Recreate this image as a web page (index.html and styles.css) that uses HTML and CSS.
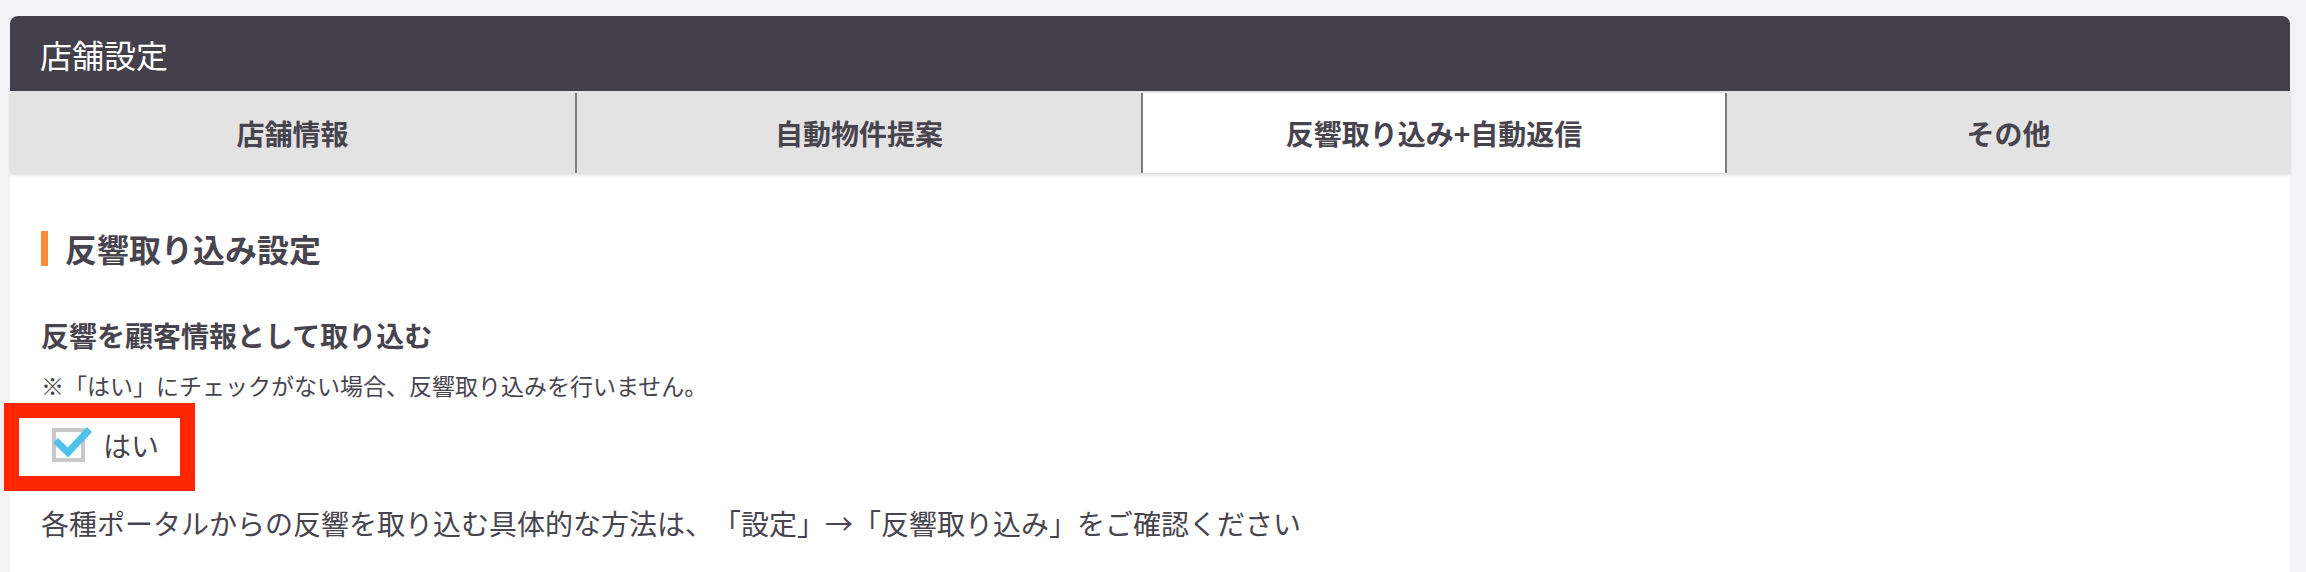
FILE: index.html
```html
<!DOCTYPE html>
<html lang="ja">
<head>
<meta charset="utf-8">
<title>店舗設定</title>
<link rel="stylesheet" href="styles.css">
</head>
<body>
<div class="card">
  <div class="card-header">店舗設定</div>
  <div class="tabs">
    <div class="tab">店舗情報</div>
    <div class="tab divided">自動物件提案</div>
    <div class="tab divided active">反響取り込み+自動返信</div>
    <div class="tab divided">その他</div>
  </div>
  <div class="card-body">
    <h2 class="section-title">反響取り込み設定</h2>
    <h3 class="field-label">反響を顧客情報として取り込む</h3>
    <p class="note">※「はい」にチェックがない場合、反響取り込みを行いません。</p>
    <div class="check-row">
      <span class="highlight"></span>
      <span class="checkbox">
        <svg class="checkmark" width="42" height="34" viewBox="0 0 42 34"><path d="M3.5 12.5 L16 24.5 L37.5 1.5" fill="none" stroke="#4fc1ea" stroke-width="7" stroke-linecap="butt" stroke-linejoin="miter"/></svg>
      </span>
      <span class="check-label">はい</span>
    </div>
    <p class="help">各種ポータルからの反響を取り込む具体的な方法は、「設定」→「反響取り込み」をご確認ください</p>
  </div>
</div>
</body>
</html>
```

FILE: styles.css
```css
html, body {
  margin: 0;
  padding: 0;
}
body {
  background: #f3f3f5;
  font-family: "Noto Sans CJK JP", "Noto Sans", sans-serif;
  color: #47444e;
  padding: 16px 16px 0 10px;
  overflow: hidden;
  text-spacing-trim: space-all;
}
.card {
  width: 2280px;
  background: #ffffff;
  border-radius: 8px 8px 0 0;
  min-height: 600px;
}
.card-header {
  height: 75px;
  background: #433f4b;
  border-radius: 8px 8px 0 0;
  color: #ffffff;
  font-size: 32px;
  display: flex;
  align-items: center;
  padding-left: 30px;
  box-sizing: border-box;
}
.tabs {
  display: grid;
  grid-template-columns: 565fr 566fr 584fr 565fr;
  height: 82px;
  background: #e3e3e3;
  padding-top: 2px;
  box-sizing: border-box;
  box-shadow: 0 2px 3px rgba(0, 0, 0, 0.14);
  position: relative;
}
.tab {
  display: flex;
  align-items: center;
  justify-content: center;
  font-size: 28px;
  font-weight: 700;
  color: #47444e;
}
.tab.divided {
  border-left: 2px solid #7b7980;
}
.tab.active {
  background: #ffffff;
}
.card-body {
  padding: 58px 0 0 31px;
}
.section-title {
  margin: 0;
  font-size: 32px;
  font-weight: 700;
  line-height: 35px;
  border-left: 7px solid #ff8c3b;
  padding-left: 17px;
  color: #47444e;
}
.field-label {
  margin: 49px 0 0 0;
  font-size: 28px;
  font-weight: 700;
  line-height: 40px;
}
.note {
  margin: 13px 0 0 0;
  font-size: 23px;
  line-height: 34px;
}
.check-row {
  position: relative;
  margin-top: 23px;
  height: 40px;
  display: flex;
  align-items: center;
  padding-left: 11px;
}
.highlight {
  position: absolute;
  left: -37px;
  top: -22px;
  width: 191px;
  height: 88px;
  border: 15px solid #ff2600;
  box-sizing: border-box;
}
.checkbox {
  position: relative;
  width: 33px;
  height: 34px;
  border: 4px solid #c9c9c9;
  box-sizing: border-box;
  background: #ffffff;
}
.checkmark {
  position: absolute;
  left: -4px;
  top: -4px;
  overflow: visible;
}
.check-label {
  margin-left: 18px;
  font-size: 28px;
  line-height: 40px;
}
.help {
  margin: 38px 0 0 0;
  font-size: 28px;
  line-height: 40px;
}
```
